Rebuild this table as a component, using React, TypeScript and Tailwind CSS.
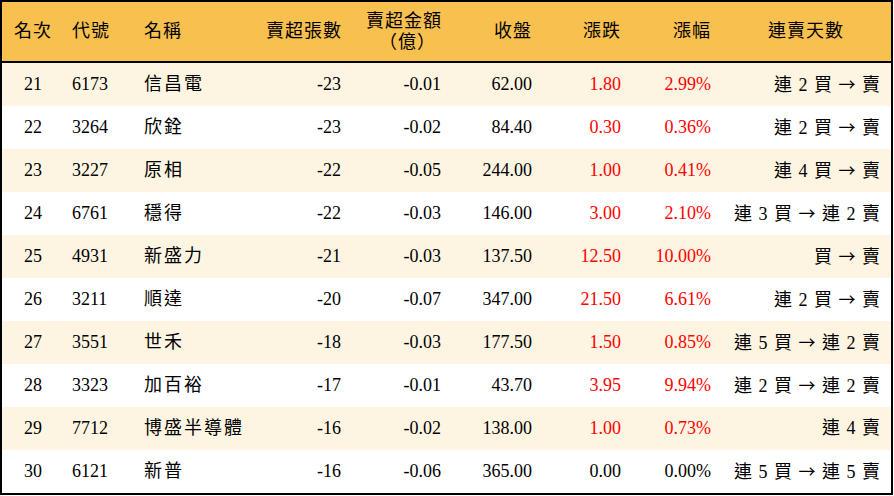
type Row = {
  rank: number;
  code: string;
  name: string;
  lots: string;
  amount: string;
  close: string;
  change: string;
  pct: string;
  streak: string;
  up: boolean;
};

const rows: Row[] = [
  { rank: 21, code: "6173", name: "信昌電", lots: "-23", amount: "-0.01", close: "62.00", change: "1.80", pct: "2.99%", streak: "連 2 買 → 賣", up: true },
  { rank: 22, code: "3264", name: "欣銓", lots: "-23", amount: "-0.02", close: "84.40", change: "0.30", pct: "0.36%", streak: "連 2 買 → 賣", up: true },
  { rank: 23, code: "3227", name: "原相", lots: "-22", amount: "-0.05", close: "244.00", change: "1.00", pct: "0.41%", streak: "連 4 買 → 賣", up: true },
  { rank: 24, code: "6761", name: "穩得", lots: "-22", amount: "-0.03", close: "146.00", change: "3.00", pct: "2.10%", streak: "連 3 買 → 連 2 賣", up: true },
  { rank: 25, code: "4931", name: "新盛力", lots: "-21", amount: "-0.03", close: "137.50", change: "12.50", pct: "10.00%", streak: "買 → 賣", up: true },
  { rank: 26, code: "3211", name: "順達", lots: "-20", amount: "-0.07", close: "347.00", change: "21.50", pct: "6.61%", streak: "連 2 買 → 賣", up: true },
  { rank: 27, code: "3551", name: "世禾", lots: "-18", amount: "-0.03", close: "177.50", change: "1.50", pct: "0.85%", streak: "連 5 買 → 連 2 賣", up: true },
  { rank: 28, code: "3323", name: "加百裕", lots: "-17", amount: "-0.01", close: "43.70", change: "3.95", pct: "9.94%", streak: "連 2 買 → 連 2 賣", up: true },
  { rank: 29, code: "7712", name: "博盛半導體", lots: "-16", amount: "-0.02", close: "138.00", change: "1.00", pct: "0.73%", streak: "連 4 賣", up: true },
  { rank: 30, code: "6121", name: "新普", lots: "-16", amount: "-0.06", close: "365.00", change: "0.00", pct: "0.00%", streak: "連 5 買 → 連 5 賣", up: false },
];

const cols = "grid grid-cols-[62px_70px_120px_97px_100px_91px_89px_90px_170px]";

function Streak({ text }: { text: string }) {
  const parts = text.split("→");
  return (
    <>
      {parts.map((p, i) => (
        <span key={i}>
          {i > 0 && <span className="font-['Noto_Sans_CJK_TC',sans-serif] text-[17px]">→</span>}
          {p}
        </span>
      ))}
    </>
  );
}

export default function App() {
  return (
    <div className="h-[496px] w-[894px] bg-white font-['Liberation_Serif','Noto_Sans_CJK_TC',serif] text-[18px] text-black">
      <div className="w-[893px] border-2 border-black">
        <div className={`${cols} h-[61px] items-center border-b-2 border-black bg-[#f8c04f] tracking-[1px]`}>
          <div className="text-center">名次</div>
          <div className="pl-2">代號</div>
          <div className="pl-[10px]">名稱</div>
          <div className="pr-[9px] text-right">賣超張數</div>
          <div className="pr-[9px] text-right leading-[21px]">
            賣超金額
            <br />
            <span className="mr-[6px]">（億）</span>
          </div>
          <div className="pr-[10px] text-right">收盤</div>
          <div className="pr-[10px] text-right">漲跌</div>
          <div className="pr-[10px] text-right">漲幅</div>
          <div className="text-center">連賣天數</div>
        </div>

        {rows.map((r, i) => (
          <div
            key={r.rank}
            className={`${cols} h-[43px] items-center ${i % 2 === 0 ? "bg-[#fdf5e2]" : "bg-white"}`}
          >
            <div className="text-center">{r.rank}</div>
            <div className="pl-2">{r.code}</div>
            <div className="pl-[10px] tracking-[2px]">{r.name}</div>
            <div className="pr-[10px] text-right">{r.lots}</div>
            <div className="pr-[10px] text-right">{r.amount}</div>
            <div className="pr-[10px] text-right">{r.close}</div>
            <div className={`pr-[10px] text-right ${r.up ? "text-[#ff0000]" : ""}`}>{r.change}</div>
            <div className={`pr-[10px] text-right ${r.up ? "text-[#ff0000]" : ""}`}>{r.pct}</div>
            <div className="whitespace-pre pr-[10px] text-right tracking-[1px]">
              <Streak text={r.streak} />
            </div>
          </div>
        ))}
      </div>
    </div>
  );
}
